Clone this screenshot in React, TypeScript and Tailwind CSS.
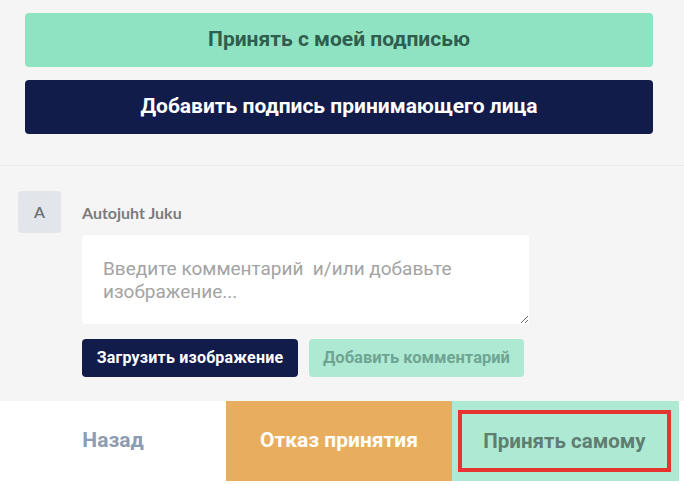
import React from "react";

// Acceptance screen: signature actions, comment box and bottom action bar

const font = { fontFamily: "Roboto, 'Noto Sans', sans-serif" };

const CommentBox = () => {
  return (
    <div className="flex pl-[18px] pt-[25px]">
      <div className="w-[43px] h-[42px] rounded-[4px] bg-[#e2e6ea] flex items-center justify-center text-[16px] font-semibold text-[#6b6f76] font-['Lato',sans-serif]">
        A
      </div>
      <div className="flex flex-col ml-[21px]">
        <div className="h-[44px] flex items-center text-[16px] font-bold text-[#7c7c7c] font-['Lato',sans-serif]">
          Autojuht Juku
        </div>
        <textarea
          className="w-[447px] h-[89px] bg-white rounded-[3px] px-[21px] pt-[22px] text-[19px] leading-[23px] text-[#555] placeholder:text-[#a3a3a3] outline-none resize-y"
          placeholder="Введите комментарий  и/или добавьте изображение..."
        />
        <div className="flex gap-[11px] mt-[15px]">
          <button className="w-[216px] h-[38px] rounded-[4px] bg-[#121c4a] text-white text-[16px] tracking-[0.2px] font-bold">
            Загрузить изображение
          </button>
          <button className="w-[215px] h-[38px] rounded-[4px] bg-[#aee9d3] text-[#6ea592] text-[16.5px] font-bold">
            Добавить комментарий
          </button>
        </div>
      </div>
    </div>
  );
};

const BottomBar = () => {
  return (
    <div className="flex h-[83px] bg-white">
      <div className="w-[226px] h-[80px] flex items-center justify-center text-[21px] font-bold text-[#8e9bb0]">
        Назад
      </div>
      <div className="w-[226px] h-[80px] bg-[#e8ae5e] flex items-center justify-center text-[21px] font-bold text-white">
        Отказ принятия
      </div>
      <div className="w-[227px] h-[80px] bg-[#aee9d3] flex items-center pl-[6px]">
        <div className="w-[213px] h-[62px] border-[4px] border-[#e3342f] flex items-center justify-center text-[20.5px] font-bold text-[#5f7d73]">
          Принять самому
        </div>
      </div>
    </div>
  );
};

export default function App() {
  return (
    <div className="w-[684px] h-[484px] bg-[#f5f5f5] flex flex-col overflow-hidden" style={font}>
      <div className="flex flex-col gap-[13px] pl-[25px] pr-[31px] pt-[13px] pb-[31px] border-b border-[#ebebeb]">
        <button className="h-[54px] rounded-[4px] bg-[#8fe3c3] text-[#2f5e4e] text-[21px] font-bold">
          Принять с моей подписью
        </button>
        <button className="h-[54px] rounded-[4px] bg-[#121c4a] text-white text-[21px] font-bold">
          Добавить подпись принимающего лица
        </button>
      </div>
      <div className="flex-1">
        <CommentBox />
      </div>
      <BottomBar />
    </div>
  );
}
